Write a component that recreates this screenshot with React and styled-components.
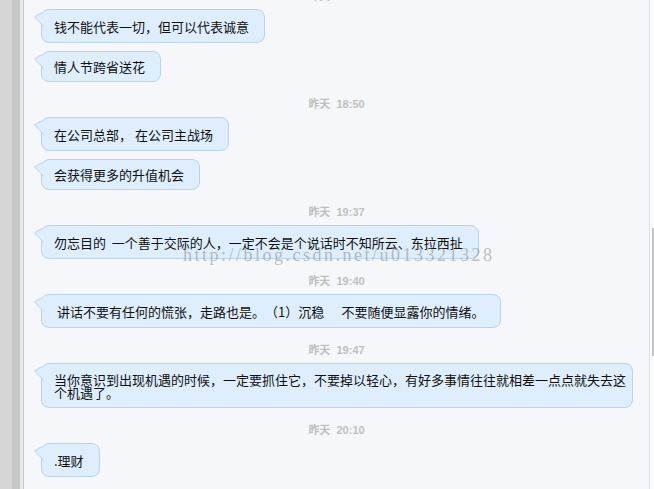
import styled, { createGlobalStyle } from "styled-components";

const messages = [
    { time: "昨天  18:49", items: ["钱不能代表一切，但可以代表诚意", "情人节跨省送花"] },
    { time: "昨天  18:50", items: ["在公司总部， 在公司主战场", "会获得更多的升值机会"] },
    { time: "昨天  19:37", items: ["勿忘目的  一个善于交际的人，一定不会是个说话时不知所云、东拉西扯"] },
    { time: "昨天  19:40", items: [" 讲话不要有任何的慌张，走路也是。（1）沉稳      不要随便显露你的情绪。"] },
    { time: "昨天  19:47", items: ["当你意识到出现机遇的时候，一定要抓住它，不要掉以轻心，有好多事情往往就相差一点点就失去这个机遇了。"], wrap: true },
    { time: "昨天  20:10", items: [".理财"] },
];

function Tail() {
    return (
        <TailSvg viewBox="0 0 10 15" width="10" height="15">
            <path d="M10 0 Q5 1.5 0.5 5 Q5 9 10 15 Z" fill="#deeefc" />
            <path d="M9.5 0.5 Q5 1.5 0.5 5 Q5 9 9.5 14.5" fill="none" stroke="#b9d3ec" strokeWidth="1" />
        </TailSvg>
    );
}

function App() {
    return (
        <>
            <GlobalStyle />
            <Page>
                <Gutter />
                <Chat>
                    <List>
                        {messages.map((group) => (
                            <Group key={group.time}>
                                <Time>{group.time}</Time>
                                {group.items.map((text, i) => (
                                    <Bubble key={i} $tight={i > 0} $wrap={group.wrap}>
                                        <Tail />
                                        {text}
                                    </Bubble>
                                ))}
                            </Group>
                        ))}
                    </List>
                    <Watermark>http://blog.csdn.net/u013321328</Watermark>
                </Chat>
                <Track>
                    <Thumb />
                </Track>
            </Page>
        </>
    );
}

const GlobalStyle = createGlobalStyle`
    body {
        margin: 0;
        background: #f5f7fa;
        overflow: hidden;
    }
`

const Page = styled.div`
    display: flex;
    width: 654px;
    height: 489px;
    overflow: hidden;
    background: #f5f7fa;
`

const Gutter = styled.div`
    flex: 0 0 23px;
    border-right: 1px solid #c9c9c9;
    background: linear-gradient(to right, #d6d6d6 0 12px, #c7c7c7 12px 20px, #e7e7e7 20px 23px);
`

const Chat = styled.div`
    position: relative;
    flex: 1;
    overflow: hidden;
`

const List = styled.div`
    display: flex;
    flex-direction: column;
    margin-top: -14px;
    padding-left: 17px;
`

const Group = styled.div`
    display: flex;
    flex-direction: column;
    align-items: flex-start;
    gap: 8px;

    & + & {
        margin-top: 12px;
    }
`

const Time = styled.div`
    align-self: stretch;
    height: 20px;
    margin-bottom: -5px;
    margin-left: -17px;
    line-height: 20px;
    text-align: center;
    white-space: pre;
    font-family: "Liberation Sans", "Noto Sans CJK SC", sans-serif;
    font-size: 11px;
    font-weight: 700;
    color: #c0c0c0;
`

const pad = (p) => {
    if (p.$wrap) return "9px 6px 8px 12px";
    if (p.$tight) return "8px 15px 8px 12px";
    return "10px 15px 9px 12px";
};

const Bubble = styled.div`
    position: relative;
    box-sizing: border-box;
    max-width: 592px;
    padding: ${pad};
    background: #deeefc;
    border: 1px solid #b9d3ec;
    border-radius: 8px;
    font-family: "Noto Sans CJK SC", "Liberation Sans", sans-serif;
    font-size: 13px;
    line-height: 13px;
    color: #111111;
    white-space: pre-wrap;
    text-spacing-trim: space-all;
`

const TailSvg = styled.svg`
    position: absolute;
    left: -8px;
    top: 2px;
    display: block;
`

const Watermark = styled.div`
    position: absolute;
    left: 159px;
    top: 246px;
    font-family: "Liberation Serif", serif;
    font-size: 18px;
    line-height: 18px;
    letter-spacing: 2.5px;
    color: rgba(130, 130, 130, 0.5);
    pointer-events: none;
`

const Track = styled.div`
    flex: 0 0 4px;
    box-sizing: border-box;
    padding: 228px 0 0 2px;
    border-left: 1px solid #e0e0e0;
    background: #fbfbfb;
`

const Thumb = styled.div`
    width: 2px;
    height: 128px;
    background: #c4c4c4;
`

export default App;
